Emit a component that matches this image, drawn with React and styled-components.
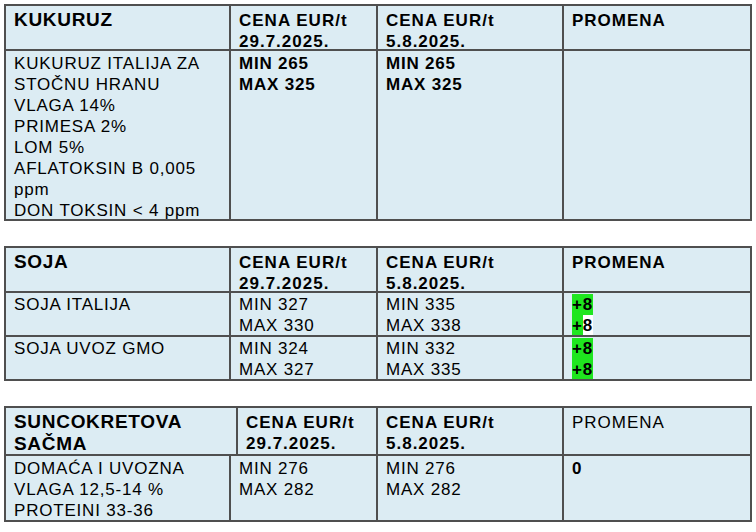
import styled, { createGlobalStyle } from "styled-components";

const GlobalStyle = createGlobalStyle`
  html, body {
    margin: 0;
    padding: 0;
    background: #ffffff;
  }
  body {
    font-family: "Liberation Sans", Arial, sans-serif;
    color: #000;
  }
`;

const Page = styled.div`
  width: 756px;
  height: 532px;
  box-sizing: border-box;
  padding: 4px 4px 0 4px;
  display: flex;
  flex-direction: column;
  gap: 25px;
`;

const Table = styled.div`
  width: 748px;
  box-sizing: border-box;
  border-top: 2px solid #4f4f4f;
  border-left: 2px solid #4f4f4f;
`;

const Row = styled.div`
  display: grid;
  grid-template-columns: ${(p) => p.$cols};
  height: ${(p) => p.$h}px;
`;

const Cell = styled.div`
  box-sizing: border-box;
  border-right: 2px solid #4f4f4f;
  border-bottom: 2px solid #4f4f4f;
  background: #dcecf3;
  padding: ${(p) => p.$pt || 2}px 8px 0 8px;
  font-size: 17px;
  line-height: 21px;
  letter-spacing: 0.8px;
  font-weight: ${(p) => (p.$bold ? 700 : 400)};
  overflow: hidden;
`;

const Title = styled(Cell)`
  font-size: 19px;
  line-height: 22px;
  font-weight: 700;
  letter-spacing: 0.7px;
  padding-top: 3px;
`;

const Head = styled(Cell)`
  font-weight: ${(p) => (p.$light ? 400 : 700)};
  padding-top: 4px;
  line-height: 21px;
  letter-spacing: 1px;
`;

const Line = styled.div`
  white-space: nowrap;
`;

const Mark = styled.span`
  display: inline-block;
  font-weight: 700;
  background: ${(p) => (p.$plain ? "#ffffff" : "#1fe61f")};
  line-height: 21px;
`;

const COLS = "225px 147px 186px 188px";
const COLS_HEAD3 = "232px 140px 186px 188px";

function Lines({ items }) {
  return items.map((t) => <Line key={t}>{t}</Line>);
}

function Plus() {
  return (
    <Line>
      <Mark>+8</Mark>
    </Line>
  );
}

export default function App() {
  return (
    <>
      <GlobalStyle />
      <Page>
        <Table>
          <Row $cols={COLS} $h={45}>
            <Title>KUKURUZ</Title>
            <Head>
              <Lines items={["CENA EUR/t", "29.7.2025."]} />
            </Head>
            <Head>
              <Lines items={["CENA EUR/t", "5.8.2025."]} />
            </Head>
            <Head>PROMENA</Head>
          </Row>
          <Row $cols={COLS} $h={170}>
            <Cell $pt={2}>
              <Lines
                items={[
                  "KUKURUZ ITALIJA ZA",
                  "STOČNU HRANU",
                  "VLAGA 14%",
                  "PRIMESA 2%",
                  "LOM 5%",
                  "AFLATOKSIN B 0,005",
                  "ppm",
                  "DON TOKSIN < 4 ppm",
                ]}
              />
            </Cell>
            <Cell $bold>
              <Lines items={["MIN 265", "MAX 325"]} />
            </Cell>
            <Cell $bold>
              <Lines items={["MIN 265", "MAX 325"]} />
            </Cell>
            <Cell />
          </Row>
        </Table>

        <Table>
          <Row $cols={COLS} $h={45}>
            <Title>SOJA</Title>
            <Head>
              <Lines items={["CENA EUR/t", "29.7.2025."]} />
            </Head>
            <Head>
              <Lines items={["CENA EUR/t", "5.8.2025."]} />
            </Head>
            <Head>PROMENA</Head>
          </Row>
          <Row $cols={COLS} $h={44}>
            <Cell $pt={1}>SOJA ITALIJA</Cell>
            <Cell $pt={1}>
              <Lines items={["MIN 327", "MAX 330"]} />
            </Cell>
            <Cell $pt={1}>
              <Lines items={["MIN 335", "MAX 338"]} />
            </Cell>
            <Cell $pt={1}>
              <Plus />
              <Line>
                <Mark>+</Mark>
                <Mark $plain>8</Mark>
              </Line>
            </Cell>
          </Row>
          <Row $cols={COLS} $h={44}>
            <Cell $pt={1}>SOJA UVOZ GMO</Cell>
            <Cell $pt={1}>
              <Lines items={["MIN 324", "MAX 327"]} />
            </Cell>
            <Cell $pt={1}>
              <Lines items={["MIN 332", "MAX 335"]} />
            </Cell>
            <Cell $pt={1}>
              <Plus />
              <Plus />
            </Cell>
          </Row>
        </Table>

        <Table>
          <Row $cols={COLS_HEAD3} $h={48}>
            <Title>
              <Lines items={["SUNCOKRETOVA", "SAČMA"]} />
            </Title>
            <Head>
              <Lines items={["CENA EUR/t", "29.7.2025."]} />
            </Head>
            <Head>
              <Lines items={["CENA EUR/t", "5.8.2025."]} />
            </Head>
            <Head $light>PROMENA</Head>
          </Row>
          <Row $cols={COLS} $h={66}>
            <Cell $pt={2}>
              <Lines
                items={["DOMAĆA I UVOZNA", "VLAGA 12,5-14 %", "PROTEINI 33-36"]}
              />
            </Cell>
            <Cell $pt={2}>
              <Lines items={["MIN 276", "MAX 282"]} />
            </Cell>
            <Cell $pt={2}>
              <Lines items={["MIN 276", "MAX 282"]} />
            </Cell>
            <Cell $pt={2} $bold>
              0
            </Cell>
          </Row>
        </Table>
      </Page>
    </>
  );
}
